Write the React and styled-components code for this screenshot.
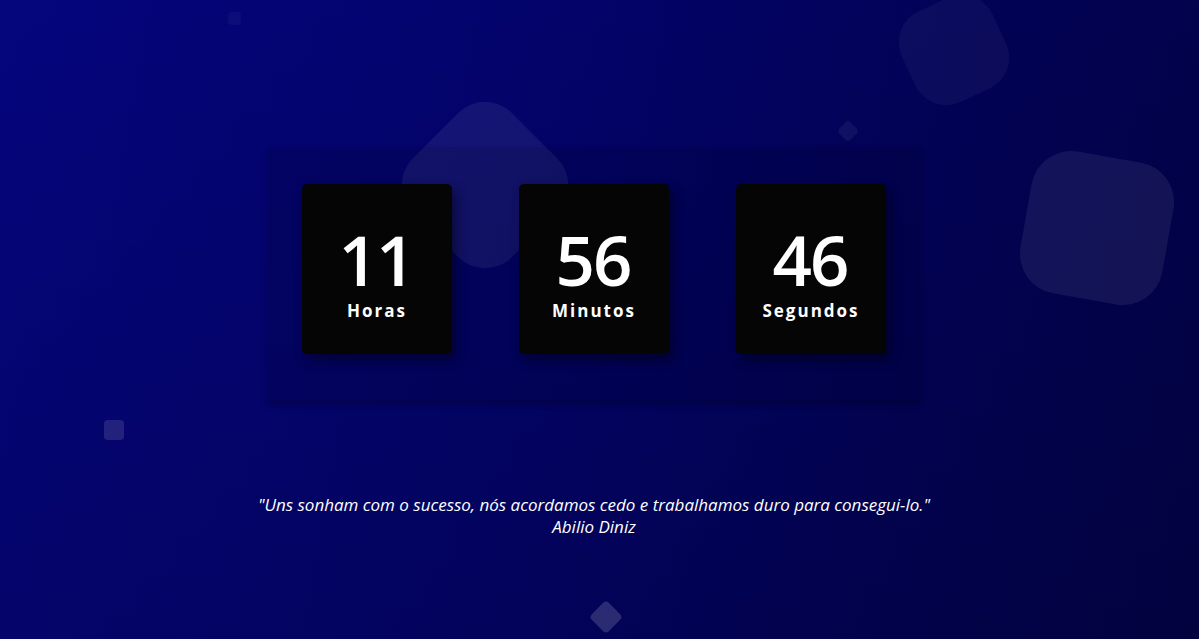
import React from "react";
import styled, { createGlobalStyle } from "styled-components";

const Global = createGlobalStyle`
  html, body { margin: 0; padding: 0; height: 100%; }
  body {
    font-family: "Open Sans", "Liberation Sans", sans-serif;
    background: linear-gradient(100deg, #05057d 0%, #03036c 40%, #020256 75%, #020248 100%);
    overflow: hidden;
  }
`;

const Page = styled.div`
  position: relative;
  width: 100vw;
  height: 100vh;
  overflow: hidden;
  display: flex;
  flex-direction: column;
  align-items: center;
  padding-right: 11px;
  box-sizing: border-box;
  background: linear-gradient(180deg, rgba(0,0,0,0) 0%, rgba(0,0,0,0.12) 100%);
`;

const Shape = styled.div`
  position: absolute;
  left: ${(p) => p.$x}px;
  top: ${(p) => p.$y}px;
  width: ${(p) => p.$s}px;
  height: ${(p) => p.$s}px;
  border-radius: ${(p) => p.$r}px;
  transform: rotate(${(p) => p.$rot}deg);
  background: rgba(255, 255, 255, ${(p) => p.$a});
`;

const Panel = styled.div`
  position: relative;
  z-index: 1;
  margin-top: 147px;
  width: 652px;
  height: 253px;
  box-sizing: border-box;
  padding: 37px 34px 0;
  display: flex;
  justify-content: space-between;
  align-items: flex-start;
  background: rgba(0, 0, 20, 0.12);
  box-shadow: 0 4px 6px rgba(0, 0, 0, 0.25);
`;

const Card = styled.div`
  width: 150px;
  height: 170px;
  background: #050505;
  border-radius: 5px;
  box-shadow: 4px 6px 12px rgba(0, 0, 0, 0.45);
  display: flex;
  flex-direction: column;
  align-items: center;
  color: #fff;
`;

const Number = styled.div`
  margin-top: 37px;
  font-size: 69px;
  font-weight: 600;
  line-height: 76px;
  letter-spacing: -2px;
  padding-right: 2px;
`;

const Label = styled.div`
  margin-top: 2px;
  font-size: 17px;
  font-weight: 700;
  letter-spacing: 2px;
  line-height: 24px;
`;

const Quote = styled.p`
  position: relative;
  z-index: 1;
  margin: 94px 0 0;
  color: #fff;
  font-style: italic;
  font-size: 17px;
  line-height: 22px;
  text-align: center;
`;

const shapes = [
  { x: 228, y: 12, s: 13, r: 4, rot: 0, a: 0.035 },
  { x: 415, y: 115, s: 140, r: 38, rot: 45, a: 0.07 },
  { x: 904, y: 0, s: 100, r: 34, rot: -25, a: 0.045 },
  { x: 840, y: 123, s: 16, r: 4, rot: 45, a: 0.06 },
  { x: 1025, y: 156, s: 144, r: 40, rot: 10, a: 0.07 },
  { x: 104, y: 420, s: 20, r: 4, rot: 0, a: 0.12 },
  { x: 594, y: 605, s: 24, r: 4, rot: 45, a: 0.16 },
];

const units = [
  { n: "11", l: "Horas" },
  { n: "56", l: "Minutos" },
  { n: "46", l: "Segundos" },
];

export default function App() {
  return (
    <>
      <Global />
      <Page>
        {shapes.map((s, i) => (
          <Shape key={i} $x={s.x} $y={s.y} $s={s.s} $r={s.r} $rot={s.rot} $a={s.a} />
        ))}
        <Panel>
          {units.map((u) => (
            <Card key={u.l}>
              <Number>{u.n}</Number>
              <Label>{u.l}</Label>
            </Card>
          ))}
        </Panel>
        <Quote>
          "Uns sonham com o sucesso, nós acordamos cedo e trabalhamos duro para consegui-lo."
          <br />
          Abilio Diniz
        </Quote>
      </Page>
    </>
  );
}
